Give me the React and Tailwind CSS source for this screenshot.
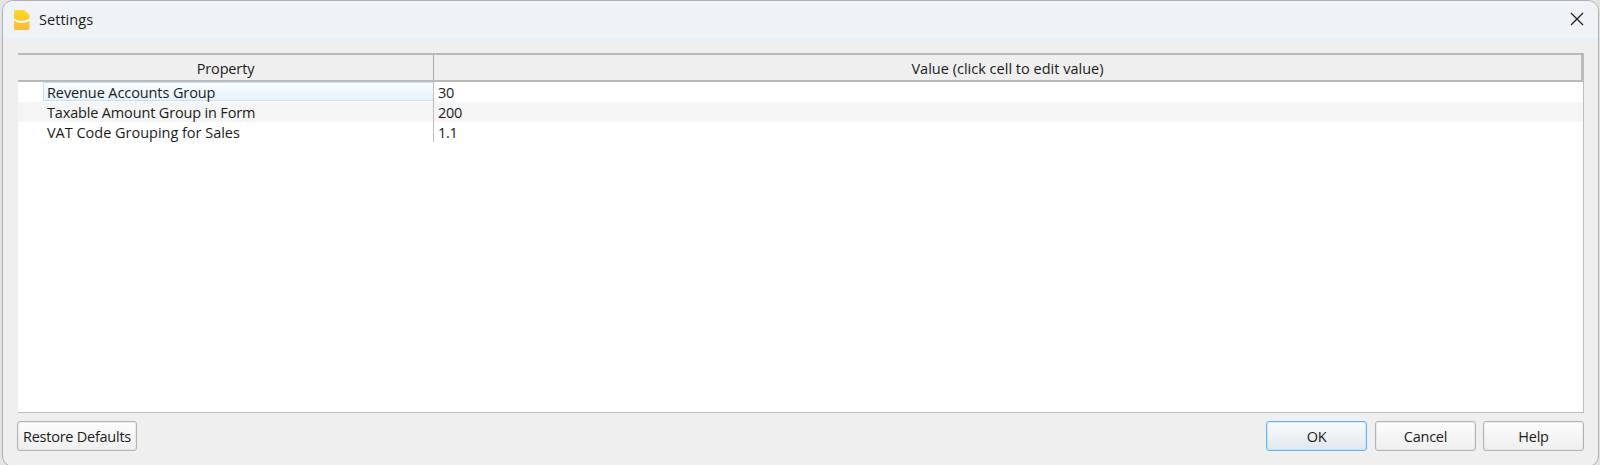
const rows = [
  { name: 'Revenue Accounts Group', value: '30', tracking: 'tracking-[-0.1px]', selected: true },
  { name: 'Taxable Amount Group in Form', value: '200', tracking: 'tracking-[-0.16px]', striped: true },
  { name: 'VAT Code Grouping for Sales', value: '1.1', tracking: 'tracking-[-0.02px]' },
];

function AppIcon() {
  return (
    <svg className="h-5 w-4" viewBox="0 0 16 20">
      <defs>
        <linearGradient id="icon" x1="0" y1="0" x2="0" y2="1">
          <stop offset="0" stopColor="#ffd91f" />
          <stop offset="1" stopColor="#fcb93c" />
        </linearGradient>
      </defs>
      <path fill="url(#icon)" d="M1.5 0H10.5L15.5 5V18.5a1.5 1.5 0 0 1-1.5 1.5H1.5a1.5 1.5 0 0 1-1.5-1.5V1.5a1.5 1.5 0 0 1 1.5-1.5Z" />
      <path fill="none" stroke="#fafbfc" strokeWidth="1.9" d="M0 9.4Q3 12 7.5 12T15.8 9.4" />
    </svg>
  );
}

function Button({ children, className, primary }) {
  const look = primary
    ? 'border-[#5eb4fa] from-[#fbfcfd] to-[#e0e7ed] ring-[#b5dcfb]/50'
    : 'border-[#b3b3b3] from-[#fdfdfd] to-[#efefef] ring-[#d8d8d8]/40';
  return (
    <button
      className={`flex h-[30px] items-center justify-center rounded-[3px] border bg-linear-to-b pt-px whitespace-nowrap ring-1 ring-inset ${look} ${className}`}
    >
      {children}
    </button>
  );
}

export default function App() {
  return (
    <div className="h-[465px] w-[1600px] overflow-hidden bg-[#e3e3e3] pl-[2px] font-['Open_Sans','Noto_Sans',sans-serif] text-[14.5px] leading-5 tracking-[-0.25px] text-[#1c1c1c]">
      <div className="flex h-[467px] w-[1597px] flex-col overflow-hidden rounded-[11px] border border-[#b0b0b0] bg-[#efefef]">
        <header className="flex h-[37px] shrink-0 items-center bg-[#eff3f8] pr-[14px] pl-[11px]">
          <AppIcon />
          <span className="ml-[9px] flex-1 text-[14.5px] tracking-[0.04px]">Settings</span>
          <svg className="mb-px h-3.5 w-3.5" viewBox="0 0 14 14" stroke="#202020" strokeWidth="1.3">
            <path d="M1 1L13 13M13 1L1 13" />
          </svg>
        </header>
        <main className="mt-[15px] mr-[14px] ml-[15px] flex h-[360px] shrink-0 flex-col border-r border-b border-[#bdbdbd] bg-white">
          <div className="flex h-[29px] shrink-0 border-y-2 border-r-2 border-[#b9b9b9] bg-[#efefef] text-center leading-[27px]">
            <div className="w-[416px] border-r border-[#a9a9a9] tracking-[-0.15px]">Property</div>
            <div className="flex-1 tracking-[0.01px]">Value (click cell to edit value)</div>
          </div>
          {rows.map((row) => (
            <div key={row.name} className={`flex h-5 ${row.striped ? 'bg-[#f5f5f5]' : 'bg-white'}`}>
              <div className="w-[25px]" />
              <div
                className={`h-[19px] w-[390px] border-y border-l pl-[3px] leading-5 ${row.tracking} ${
                  row.selected ? 'border-[#c4e1f5] bg-linear-to-b from-[#fafdff] to-[#e6f3fc]' : 'border-transparent'
                }`}
              >
                {row.name}
              </div>
              <div className="border-l border-[#bdbdbd] pl-1 leading-[22px]">{row.value}</div>
            </div>
          ))}
        </main>
        <footer className="mt-2 mr-[14px] ml-[14px] flex">
          <Button className="w-[120px]">Restore Defaults</Button>
          <Button className="ml-auto w-[101px]" primary>OK</Button>
          <Button className="ml-2 w-[101px]">Cancel</Button>
          <Button className="ml-[7px] w-[101px]">Help</Button>
        </footer>
      </div>
    </div>
  );
}
